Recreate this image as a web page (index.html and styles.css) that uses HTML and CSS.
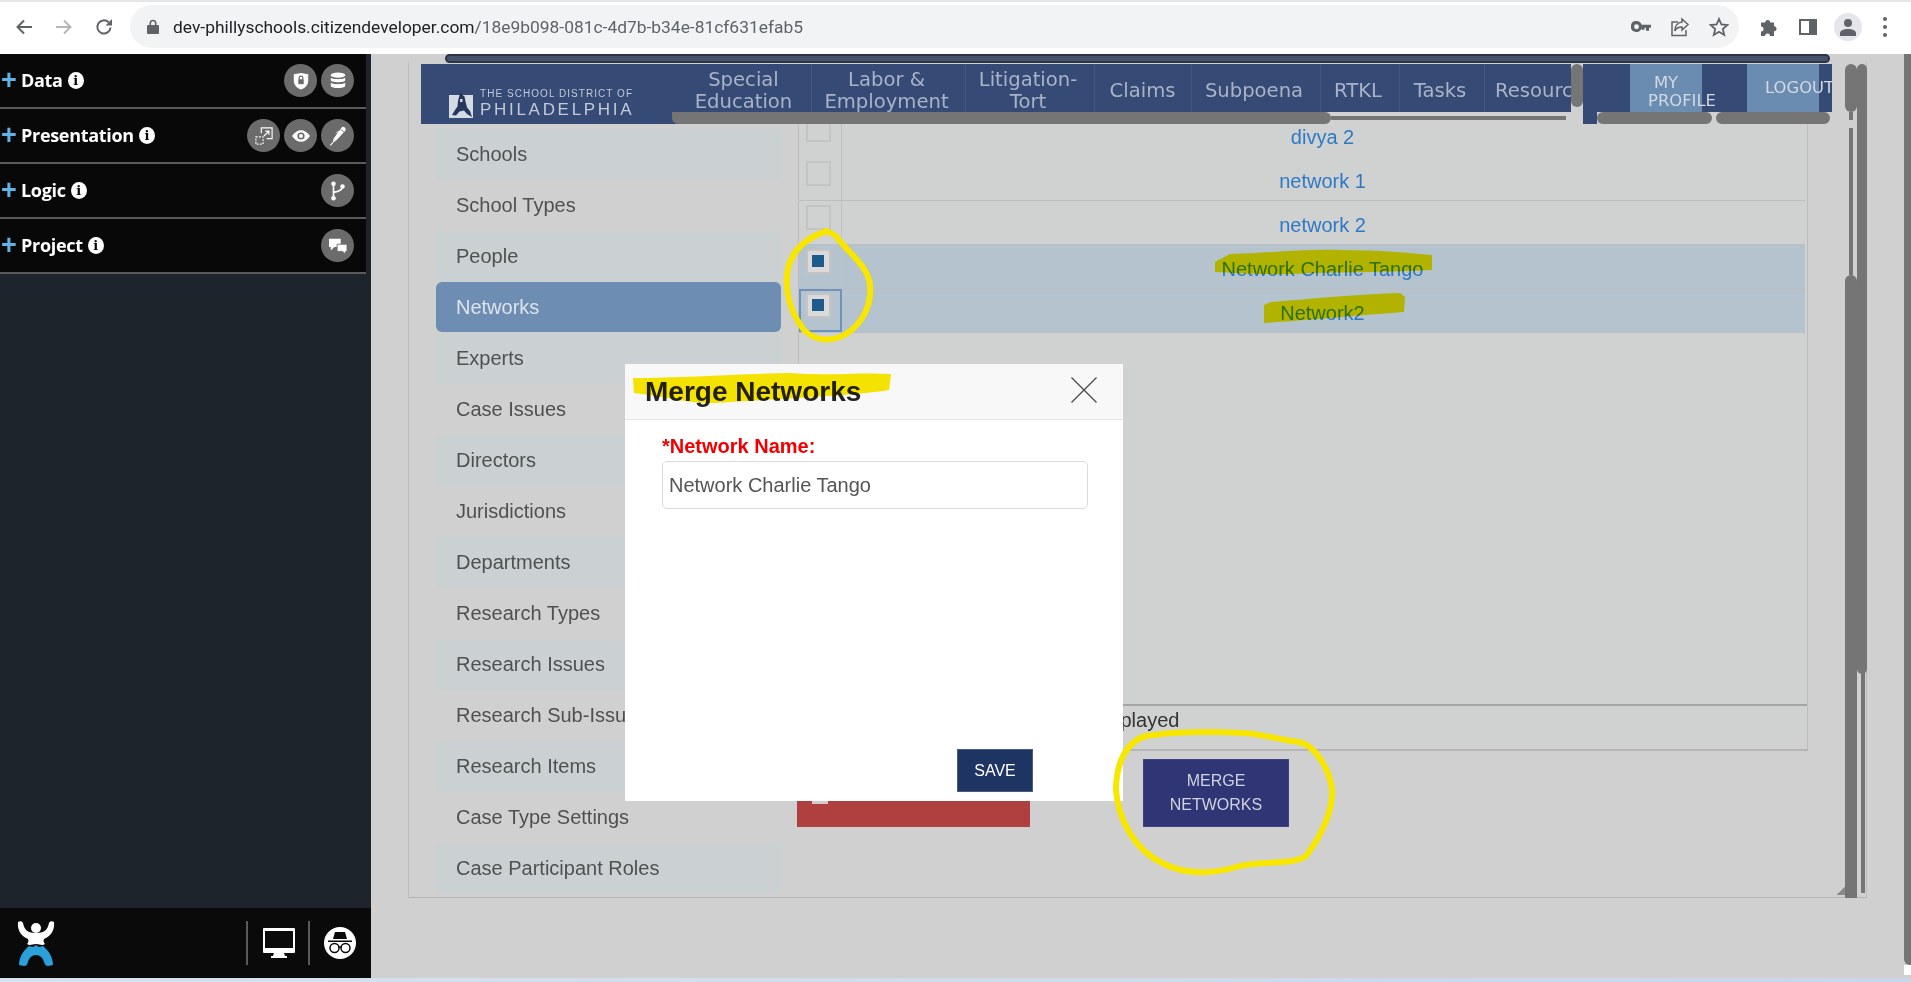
FILE: index.html
```html
<!DOCTYPE html>
<html lang="en">
<head>
    <meta charset="UTF-8">
    <title>Merge Networks</title>
    <link rel="stylesheet" href="styles.css">
</head>
<body>
    <!-- browser toolbar -->
    <div class="browser-bar">
        <svg class="tb-icon" width="18" height="18" viewBox="0 0 18 18"><path d="M17 9H3M9 2.500 2.500 9 9 15.500" fill="none" stroke="#5f6368" stroke-width="2"/></svg>
        <svg class="tb-icon" width="18" height="18" viewBox="0 0 18 18"><path d="M1 9h14M9 2.500 15.500 9 9 15.500" fill="none" stroke="#b4b7bb" stroke-width="2"/></svg>
        <svg class="tb-icon" width="18" height="18" viewBox="0 0 18 18"><path d="M15.500 9.500a6.600 6.600 0 1 1-1.900-5.200" fill="none" stroke="#5f6368" stroke-width="2"/><path d="M17 1v6.500h-6.500z" fill="#5f6368"/></svg>
        <div class="address-pill">
            <svg class="lock" width="12" height="15" viewBox="0 0 12 15"><path d="M2.500 6V4.200a3.500 3.500 0 0 1 7 0V6H11a1 1 0 0 1 1 1v7a1 1 0 0 1-1 1H1a1 1 0 0 1-1-1V7a1 1 0 0 1 1-1zm1.600 0h3.800V4.200a1.900 1.900 0 0 0-3.800 0z" fill="#5f6368"/></svg>
            <div class="address-text"><span class="host">dev-phillyschools.citizendeveloper.com</span>/18e9b098-081c-4d7b-b34e-81cf631efab5</div>
            <svg class="pill-icon" width="20" height="12" viewBox="0 0 20 12"><path d="M5.500 0a5.500 5.500 0 0 1 5.200 3.800H20v3h-2v3h-3v-3h-1.500v2h-3V7.300A5.500 5.500 0 1 1 5.500 0zm0 3.300a2.400 2.400 0 1 0 0 4.900 2.400 2.400 0 0 0 0-4.900z" fill="#5f6368"/></svg>
            <svg class="pill-icon" width="20" height="20" viewBox="0 0 20 20"><path d="M8 5H2v13.500h14V13M12 2l6 5.500-6 5.500V10C8 10 6 11.500 4.800 14c0-5 3-8.500 7.200-9z" fill="none" stroke="#5f6368" stroke-width="1.500"/></svg>
            <svg class="pill-icon" width="20" height="20" viewBox="0 0 20 20"><path d="m10 2 2.400 5.500 6 .5-4.600 4 1.400 5.900L10 14.800 4.800 17.900 6.200 12 1.600 8l6-.5z" fill="none" stroke="#5f6368" stroke-width="1.800"/></svg>
        </div>
        <svg class="ext-icon" width="18" height="18" viewBox="0 0 18 18"><path d="M1 4.500h4.200a2.500 2.500 0 1 1 5 0H14v3.800a2.500 2.500 0 1 1 0 5V18h-4a2.500 2.500 0 0 0-5 0H1v-4.500a2.500 2.500 0 1 0 0-5z" fill="#5f6368"/></svg>
        <svg class="ext-icon panel-icon" width="18" height="18" viewBox="0 0 18 18"><path d="M0 1h18v16H0zm2 2v12h8V3z" fill="#5f6368"/></svg>
        <div class="avatar"><svg width="16" height="18" viewBox="0 0 16 18"><circle cx="8" cy="5" r="4" fill="#5f6368"/><path d="M0 18v-3c0-2.500 4-4 8-4s8 1.500 8 4v3z" fill="#5f6368"/></svg></div>
        <div class="menu-dots"><i></i><i></i><i></i></div>
    </div>

    <div class="app">
        <!-- builder sidebar -->
        <aside class="sidebar">
            <div class="section">
                <span class="plus">+</span><span class="section-name">Data</span><span class="info">i</span>
                <div class="round-icons">
                    <span class="round"><svg width="18" height="20" viewBox="0 0 18 20"><path d="M1 2.500 9 1l8 1.500V10c0 5-4 8-8 9.500C5 18 1 15 1 10z" fill="#fff"/><path d="M7 8V6.500a2 2 0 0 1 4 0V8" fill="none" stroke="#6b6b6b" stroke-width="1.400"/><rect x="6" y="8" width="6" height="5.500" fill="#6b6b6b"/></svg></span>
                    <span class="round"><svg width="18" height="20" viewBox="0 0 18 20"><ellipse cx="9" cy="3.500" rx="8" ry="3" fill="#fff"/><path d="M1 6.500c1 2 15 2 16 0v3c-1 2.500-15 2.500-16 0zM1 12c1 2 15 2 16 0v3.500c-1 3-15 3-16 0z" fill="#fff"/></svg></span>
                </div>
            </div>
            <div class="section">
                <span class="plus">+</span><span class="section-name">Presentation</span><span class="info">i</span>
                <div class="round-icons">
                    <span class="round"><svg width="20" height="20" viewBox="0 0 20 20"><path d="M7 7V1h12v12h-6" fill="none" stroke="#fff" stroke-width="1.300"/><path d="M10 10l5-5M11.500 4.500H15.500V8.500" fill="none" stroke="#fff" stroke-width="1.300"/><rect x="1" y="11" width="8" height="8" fill="none" stroke="#fff" stroke-width="1.300" stroke-dasharray="2 1.500"/></svg></span>
                    <span class="round"><svg width="20" height="14" viewBox="0 0 20 14"><path d="M0 7c3-4.500 6.500-6.500 10-6.500S17 2.500 20 7c-3 4.500-6.500 6.500-10 6.500S3 11.500 0 7z" fill="#fff"/><circle cx="10" cy="7" r="4" fill="#6b6b6b"/><circle cx="10" cy="7" r="2.200" fill="#fff"/></svg></span>
                    <span class="round"><svg width="20" height="22" viewBox="0 0 20 22"><path d="M14 1.500c1-1 2.800-1 3.800.2 1 1.100 1 2.700 0 3.700L8 16l-3.800 2.500L5 14z" fill="#fff"/><path d="M13 3.500l4 3.500" stroke="#6b6b6b" stroke-width="1"/><path d="M13.500 8l-3-2.500L8 8" fill="none" stroke="#fff" stroke-width="1"/><path d="M4.500 18 1.500 21.500" stroke="#fff" stroke-width="1.200"/></svg></span>
                </div>
            </div>
            <div class="section">
                <span class="plus">+</span><span class="section-name">Logic</span><span class="info">i</span>
                <div class="round-icons">
                    <span class="round"><svg width="16" height="22" viewBox="0 0 16 22"><circle cx="3" cy="3" r="2.500" fill="#fff"/><circle cx="3" cy="19" r="2.500" fill="#fff"/><circle cx="13" cy="6" r="2.500" fill="#fff"/><path d="M3 3v16M13 6c0 4-4 5.500-10 6.500" fill="none" stroke="#fff" stroke-width="1.800"/></svg></span>
                </div>
            </div>
            <div class="section">
                <span class="plus">+</span><span class="section-name">Project</span><span class="info">i</span>
                <div class="round-icons">
                    <span class="round"><svg width="20" height="18" viewBox="0 0 20 18"><path d="M0 1h13v9H6l-4 4v-4H0z" fill="#fff"/><path d="M9 7h11v8h-1.500v3L15 15H9z" fill="#fff" stroke="#6b6b6b" stroke-width="1"/></svg></span>
                </div>
            </div>
            <div class="sidebar-fill"></div>
            <div class="sidebar-footer">
                <svg class="brand" width="38" height="46" viewBox="0 0 38 46">
                    <circle cx="19" cy="7" r="5" fill="#fff"/>
                    <path d="M1 1c2-1 4-1 5 1 1 5 3 10 13 10S31 7 32 2c1-2 3-2 5-1 1 8-3 14-10 17-1 2 0 4 1 5-3 2-5 0-9 0s-6 2-9 0c1-1 2-3 1-5C4 15 0 9 1 1z" fill="#fff"/>
                    <path d="M2 44c0-6 3-13 8-17 2-3 4-1 5-1 2 0 4-2 4-2s2 2 4 2c1 0 3-2 5 1 5 4 8 11 8 17l-5 1c-2 0-3-1-4-4-1-4-4-7-8-7s-7 3-8 7c-1 3-2 4-4 4z" fill="#2a9fd8"/>
                </svg>
                <div class="footer-icons">
                    <svg width="32" height="30" viewBox="0 0 32 30"><path d="M1 0h30a1 1 0 0 1 1 1v23a1 1 0 0 1-1 1H1a1 1 0 0 1-1-1V1a1 1 0 0 1 1-1zm1 3v17h28V3z" fill="#fff"/><path d="M11 25h10l1 3h2v2H8v-2h2z" fill="#fff"/></svg>
                    <span class="spy"><svg width="24" height="22" viewBox="0 0 24 22"><path d="M7 0h10l2 7H5z" fill="#0a0a0a"/><path d="M0 8.500h24V10H0z" fill="#0a0a0a"/><circle cx="6.500" cy="16" r="4.500" fill="none" stroke="#0a0a0a" stroke-width="1.500"/><circle cx="17.500" cy="16" r="4.500" fill="none" stroke="#0a0a0a" stroke-width="1.500"/><path d="M10.500 15h3" stroke="#0a0a0a" stroke-width="1.500"/></svg></span>
                </div>
            </div>
        </aside>

        <main class="workspace">
            <div class="panel">
                <header class="app-header">
                    <div class="brand-logo">
                        <svg width="24" height="26" viewBox="0 0 24 26"><path d="M0 3h24v23H0z" fill="#d5dae4"/><path d="M12 0l1.500 3 2 1.500 1 5 1.500 6 3 3.500 2 6-5-3-3-3.500-4.500 1-3.500 4-4-.5 3-5 2.500-3.500.5-5.500 1-4L10.500 3z" fill="#26385e"/><path d="M11 7h2.500v3H11z" fill="#d5dae4"/></svg>
                        <div class="brand-text">
                            <div class="brand-small">THE SCHOOL DISTRICT OF</div>
                            <div class="brand-big">PHILADELPHIA</div>
                        </div>
                    </div>
                    <nav class="top-nav">
                        <a class="nav-item w-special">Special Education</a>
                        <a class="nav-item w-labor">Labor &amp; Employment</a>
                        <a class="nav-item w-lit">Litigation-Tort</a>
                        <a class="nav-item w-claims">Claims</a>
                        <a class="nav-item w-sub">Subpoena</a>
                        <a class="nav-item w-rtkl">RTKL</a>
                        <a class="nav-item w-tasks">Tasks</a>
                        <a class="nav-item w-res">Resources</a>
                    </nav>
                    <div class="user-actions">
                        <a class="user-btn profile"><span class="my">MY</span><span class="prof">PROFILE</span></a>
                        <a class="user-btn logout">LOGOUT</a>
                    </div>
                </header>

                <div class="content">
                    <ul class="side-list">
                        <li>Schools</li>
                        <li>School Types</li>
                        <li>People</li>
                        <li class="active">Networks</li>
                        <li>Experts</li>
                        <li>Case Issues</li>
                        <li>Directors</li>
                        <li>Jurisdictions</li>
                        <li>Departments</li>
                        <li>Research Types</li>
                        <li>Research Issues</li>
                        <li>Research Sub-Issues</li>
                        <li>Research Items</li>
                        <li>Case Type Settings</li>
                        <li>Case Participant Roles</li>
                    </ul>

                    <section class="grid-area">
                        <div class="grid">
                            <div class="grid-rows">
                                <div class="row no-line">
                                    <div class="check-cell"><span class="check"></span></div>
                                    <a class="row-link">divya 2</a>
                                </div>
                                <div class="row">
                                    <div class="check-cell"><span class="check"></span></div>
                                    <a class="row-link">network 1</a>
                                </div>
                                <div class="row">
                                    <div class="check-cell"><span class="check"></span></div>
                                    <a class="row-link">network 2</a>
                                </div>
                                <div class="row selected">
                                    <div class="check-cell"><span class="check on"></span></div>
                                    <a class="row-link">Network Charlie Tango</a>
                                </div>
                                <div class="row selected">
                                    <div class="check-cell focused"><span class="check on"></span></div>
                                    <a class="row-link">Network2</a>
                                </div>
                            </div>
                            <div class="pager">5 records displayed</div>
                        </div>
                        <div class="grid-actions">
                            <button class="delete-btn"></button>
                            <button class="merge-btn">MERGE<br>NETWORKS</button>
                        </div>
                    </section>
                </div>

                <!-- leftover scrollbars from the builder preview -->
                <div class="sb sb-top"></div>
                <div class="sb sb-nav-track"></div>
                <div class="sb sb-nav-thumb"></div>
                <div class="sb sb-nav-v"></div>
                <div class="sb sb-thumb-a"></div>
                <div class="sb sb-thumb-b"></div>
                <div class="sb sb-v-a"></div>
                <div class="sb sb-v-track1"></div>
                <div class="sb sb-v-track2"></div>
                <div class="sb sb-v-b"></div>
                <div class="sb sb-v-c"></div>
                <div class="sb sb-v-track3"></div>
                <div class="sb sb-grip"></div>
            </div>
        </main>
    </div>
    <div class="taskbar-edge"></div>

    <!-- modal -->
    <div class="modal">
        <div class="modal-head">
            <h2>Merge Networks</h2>
            <svg width="26" height="26" viewBox="0 0 26 26"><path d="M0.500 0.500 25.500 25.500M25.500 0.500 0.500 25.500" stroke="#444" stroke-width="1.200"/></svg>
        </div>
        <div class="modal-body">
            <label class="field-label">*Network Name:</label>
            <div class="field-input">Network Charlie Tango</div>
        </div>
        <div class="modal-foot">
            <button class="save-btn">SAVE</button>
        </div>
    </div>

    <!-- highlighter marks drawn on the screenshot -->
    <svg class="marks marks-fill" width="1911" height="982" viewBox="0 0 1911 982">
        <path d="M633 378C680 378 740 374 790 373 825 376 860 372 891 374L889 390C850 396 790 398 730 402 700 406 670 398 650 395L634 393Z"/>
        <path d="M1215 262 1230 254C1270 253 1300 249 1340 250 1380 250 1410 253 1432 255L1432 270C1390 272 1350 272 1310 273 1280 276 1240 273 1215 272Z"/>
        <path d="M1264 305 1271 302C1310 299 1360 294 1400 293L1405 297 1404 312C1360 315 1310 320 1264 323Z"/>
    </svg>
    <svg class="marks marks-line" width="1911" height="982" viewBox="0 0 1911 982">
        <path d="M827 231C810 236 793 248 788 268 784 290 790 312 804 330 816 342 832 342 846 334 862 324 872 305 870 285 868 265 845 250 836 236Z"/>
        <path d="M1242 733C1210 731 1170 732 1146 736 1125 742 1116 765 1116 790 1118 820 1135 850 1162 863 1185 875 1210 875 1240 866 1265 860 1290 866 1306 856 1322 835 1333 810 1332 790 1330 770 1315 745 1299 742 1280 740 1258 733 1242 733Z"/>
    </svg>
</body>
</html>
```

FILE: styles.css
```css
* {
    box-sizing: border-box;
}

body {
    margin: 0;
    height: 982px;
    overflow: hidden;
    display: flex;
    flex-direction: column;
    font-family: "Liberation Sans", Arial, sans-serif;
    background-color: #d0d0d0;
}

ul {
    list-style: none;
    margin: 0;
    padding: 0;
}

/* Browser toolbar */
.browser-bar {
    height: 54px;
    flex-shrink: 0;
    display: flex;
    align-items: center;
    background-color: #fff;
    border-top: 2px solid #e4e6ea;
    padding-left: 15px;
    padding-bottom: 3px;
}

.tb-icon {
    margin-right: 22px;
}

.address-pill {
    width: 1609px;
    height: 43px;
    margin-left: -5px;
    border-radius: 22px;
    background-color: #f1f3f4;
    display: flex;
    align-items: center;
    padding: 0 10px 0 17px;
    flex-shrink: 0;
}

.lock {
    flex-shrink: 0;
}

.address-text {
    font-family: "Roboto", sans-serif;
    font-size: 17.400px;
    color: #5f6368;
    margin-left: 14px;
    flex: 1;
    white-space: nowrap;
}

.address-text .host {
    color: #202124;
}

.pill-icon {
    margin-left: 19px;
    flex-shrink: 0;
}

.ext-icon {
    margin-left: 21px;
    margin-right: 4px;
    flex-shrink: 0;
}

.panel-icon {
    margin-left: 17px;
}

.avatar {
    width: 28px;
    height: 28px;
    margin-left: 13px;
    border-radius: 50%;
    background-color: #e4e6ec;
    display: flex;
    align-items: center;
    justify-content: center;
    flex-shrink: 0;
}

.menu-dots {
    margin-left: 21px;
    display: flex;
    flex-direction: column;
    gap: 4px;
}

.menu-dots i {
    display: block;
    width: 4px;
    height: 4px;
    border-radius: 50%;
    background-color: #5f6368;
}

/* App frame */
.app {
    display: flex;
    flex: 1;
    min-height: 0;
}

.taskbar-edge {
    height: 4px;
    flex-shrink: 0;
    background: linear-gradient(to right, #d6e2f2, #c9d6ea);
}

.sidebar {
    width: 371px;
    flex-shrink: 0;
    display: flex;
    flex-direction: column;
    background-color: #1e242c;
}

.section {
    width: 366px;
    height: 55px;
    display: flex;
    align-items: center;
    background-color: #080808;
    border-bottom: 2px solid #5a5a5a;
    color: #fff;
    font-family: "Open Sans", sans-serif;
    font-weight: 700;
    font-size: 18px;
    flex-shrink: 0;
    padding-left: 1px;
}

.plus {
    color: #5fb3e6;
    font-family: "Liberation Sans", sans-serif;
    font-size: 27px;
    font-weight: 700;
    width: 20px;
    line-height: 1;
}

.section-name {
    letter-spacing: -0.300px;
    margin-top: -2px;
}

.info {
    width: 16px;
    height: 17px;
    margin-left: 5px;
    border-radius: 50%;
    background-color: #fff;
    color: #080808;
    font-family: "DejaVu Serif", serif;
    font-size: 13px;
    font-weight: 700;
    line-height: 17px;
    text-align: center;
}

.round-icons {
    margin-left: auto;
    display: flex;
    gap: 4px;
    padding-right: 12px;
}

.round {
    width: 33px;
    height: 33px;
    border-radius: 50%;
    background-color: #6b6b6b;
    display: flex;
    align-items: center;
    justify-content: center;
}

.round svg {
    transform: scale(0.9);
}

.sidebar-fill {
    flex: 1;
}

.sidebar-footer {
    height: 70px;
    background-color: #0a0a0a;
    display: flex;
    align-items: center;
    padding-left: 17px;
}

.brand {
    margin-top: 2px;
}

.footer-icons {
    margin-left: auto;
    margin-right: 15px;
    display: flex;
    align-items: center;
    gap: 29px;
    height: 44px;
    border-left: 2px solid #5a5a5a;
    padding-left: 15px;
}

.spy {
    width: 32px;
    height: 32px;
    border-radius: 50%;
    background-color: #fff;
    display: flex;
    align-items: center;
    justify-content: center;
    position: relative;
}

.spy::before {
    content: "";
    position: absolute;
    left: -16px;
    top: -6px;
    width: 2px;
    height: 44px;
    background-color: #5a5a5a;
}

/* Main area */
.workspace {
    flex: 1;
    background-color: #d0d0d0;
    padding: 8px 44px 80px 37px;
    position: relative;
}

.workspace::after {
    content: "";
    position: absolute;
    right: 0;
    top: 0;
    bottom: 13px;
    width: 7px;
    background-color: #757575;
    border-radius: 0 0 0 6px;
}

.workspace::before {
    content: "";
    position: absolute;
    right: 0;
    bottom: 3px;
    width: 7px;
    height: 10px;
    background-color: #fff;
}

.panel {
    position: relative;
    height: 100%;
    border-left: 1px solid #bdbdbd;
    border-right: 1px solid #bdbdbd;
    border-bottom: 1px solid #b5b5b5;
    padding: 2px 0 0 12px;
}

.app-header {
    height: 60px;
    width: 1411px;
    display: flex;
    position: relative;
    z-index: 1;
}

.brand-logo {
    width: 257px;
    height: 60px;
    flex-shrink: 0;
    background-color: #354a75;
    display: flex;
    align-items: flex-end;
    gap: 7px;
    padding: 0 0 6px 28px;
}

.brand-text {
    color: #c3cad9;
    line-height: 1;
}

.brand-small {
    font-size: 10px;
    letter-spacing: 1.050px;
    white-space: nowrap;
}

.brand-big {
    font-size: 17px;
    letter-spacing: 2.700px;
    margin-top: 2px;
}

.top-nav {
    width: 893px;
    height: 48px;
    flex-shrink: 0;
    display: flex;
    overflow: hidden;
    background-color: #354a75;
    font-family: "DejaVu Sans", Verdana, sans-serif;
    font-size: 19.600px;
    line-height: 22px;
    color: #a9b3c8;
}

.nav-item {
    flex-shrink: 0;
    height: 48px;
    padding: 6px 4px 0 0;
    display: flex;
    align-items: center;
    justify-content: center;
    text-align: center;
    border-right: 1px solid #44587f;
}

.w-special {
    width: 134px;
    padding-right: 2px;
}

.w-labor { width: 154px; }
.w-lit { width: 129px; }

.w-claims {
    width: 97px;
    padding-right: 1px;
}

.w-sub { width: 129px; }
.w-rtkl { width: 79px; }
.w-tasks { width: 85px; }

.w-res {
    border-right: 0;
    justify-content: flex-start;
    padding-left: 10px;
    width: 120px;
}

/* Blue strip runs down past the buttons on its left edge */
.user-actions {
    width: 249px;
    height: 60px;
    flex-shrink: 0;
    margin-left: 12px;
    background:
        linear-gradient(#354a75, #354a75) 0 0 / 14px 60px no-repeat,
        linear-gradient(#354a75, #354a75) 0 0 / 100% 48px no-repeat;
    display: flex;
    align-items: flex-start;
    gap: 45px;
    padding-left: 47px;
    overflow: hidden;
    font-family: "DejaVu Sans", sans-serif;
    font-size: 16.400px;
    color: #d3d9e3;
}

.user-btn {
    width: 72px;
    height: 48px;
    flex-shrink: 0;
    background-color: #6a8cb1;
    white-space: nowrap;
}

.profile {
    padding-top: 10px;
    line-height: 18px;
}

.my {
    display: block;
    text-align: center;
}

.prof {
    display: block;
    margin-left: 18px;
}

.logout {
    padding: 14px 0 0 18px;
    line-height: 20px;
}

.content {
    display: flex;
    padding-left: 15px;
    gap: 17px;
}

.side-list {
    width: 345px;
    padding-top: 5px;
    flex-shrink: 0;
}

.side-list li {
    height: 51px;
    line-height: 50px;
    padding-left: 20px;
    font-size: 20px;
    color: #4f5151;
    white-space: nowrap;
    overflow: hidden;
}

.side-list li:nth-child(odd) {
    background-color: #cbd1d2;
    border-radius: 4px;
}

.side-list li.active {
    background-color: #6d8db3;
    color: #dde4ec;
    border-radius: 6px;
    height: 50px;
    margin-bottom: 1px;
}

.grid-area {
    width: 1010px;
    margin-top: -11px;
}

.grid {
    height: 638px;
    display: flex;
    flex-direction: column;
    background-color: #d0d2d2;
    border-left: 1px solid #bdbdbd;
    border-right: 1px solid #bdbdbd;
    border-bottom: 2px solid #b5b5b5;
}

.grid-rows {
    flex: 1;
    padding-right: 2px;
}

.row {
    height: 44px;
    display: flex;
    border-bottom: 1px solid #bcbebf;
}

.row.no-line {
    border-bottom: 0;
}

.row.selected {
    background-color: #b4c3ce;
}

.check-cell {
    width: 43px;
    flex-shrink: 0;
    border-right: 1px solid #c0c2c3;
    padding: 4px 0 0 7px;
}

.check-cell.focused {
    border: 2px solid #6a93bd;
    padding: 2px 0 0 5px;
}

.check {
    display: block;
    width: 25px;
    height: 25px;
    border: 2px solid #c4c4c4;
    position: relative;
}

.check.on {
    background-color: #dadada;
}

.check.on::after {
    content: "";
    position: absolute;
    left: 4px;
    top: 4px;
    width: 12px;
    height: 12px;
    background-color: #1f5a8c;
}

.row-link {
    flex: 1;
    text-align: center;
    font-size: 20px;
    line-height: 44px;
    color: #2f79c4;
    margin-top: 2px;
    padding-right: 2px;
}

.pager {
    height: 45px;
    border-top: 2px solid #a5a5a5;
    font-size: 20px;
    line-height: 26px;
    color: #333;
    padding: 1px 0 0 207px;
    white-space: nowrap;
}

.grid-actions {
    display: flex;
    gap: 113px;
    margin-top: 8px;
    margin-left: -1px;
}

.delete-btn {
    width: 233px;
    height: 68px;
    border: 0;
    background-color: #b04040;
    position: relative;
}

.delete-btn::before {
    content: "";
    position: absolute;
    left: 15px;
    bottom: 23px;
    width: 16px;
    height: 8px;
    background-color: #d8c8c8;
}

.merge-btn {
    width: 146px;
    height: 68px;
    border: 1px solid #3c4285;
    background-color: #2f3575;
    color: #cfd2df;
    font-family: "Liberation Sans", sans-serif;
    font-size: 16px;
    line-height: 24px;
    padding: 0;
}

/* Scrollbars left over in the page */
.sb {
    position: absolute;
    background-color: #757575;
    z-index: 2;
}

.sb-top {
    left: 36px;
    top: -8px;
    width: 1385px;
    height: 9px;
    background-color: #47536a;
    border: 2px solid #2c3546;
    border-radius: 5px;
}

.sb-nav-thumb {
    left: 263px;
    top: 50px;
    width: 659px;
    height: 12px;
    border-radius: 0 6px 6px 6px;
}

.sb-nav-track {
    left: 922px;
    top: 54px;
    width: 235px;
    height: 4px;
}

.sb-nav-v {
    left: 1162px;
    top: 2px;
    width: 12px;
    height: 43px;
    border-radius: 6px;
}

.sb-thumb-a {
    left: 1188px;
    top: 50px;
    width: 115px;
    height: 12px;
    border-radius: 6px;
}

.sb-thumb-b {
    left: 1307px;
    top: 50px;
    width: 114px;
    height: 12px;
    border-radius: 6px;
}

.sb-v-a {
    left: 1436px;
    top: 2px;
    width: 12px;
    height: 48px;
    border-radius: 6px;
}

.sb-v-track1 {
    left: 1440px;
    top: 50px;
    width: 4px;
    height: 8px;
}

.sb-v-track2 {
    left: 1440px;
    top: 66px;
    width: 4px;
    height: 147px;
}

.sb-v-b {
    left: 1436px;
    top: 213px;
    width: 12px;
    height: 623px;
    border-radius: 6px 6px 0 0;
}

.sb-v-c {
    left: 1448px;
    top: 2px;
    width: 10px;
    height: 610px;
    border-radius: 5px;
}

.sb-v-track3 {
    left: 1452px;
    top: 610px;
    width: 4px;
    height: 221px;
}

.sb-grip {
    left: 1428px;
    top: 825px;
    width: 8px;
    height: 8px;
    background: linear-gradient(135deg, transparent 50%, #8a8a8a 50%);
}

/* Modal */
.modal {
    position: absolute;
    left: 625px;
    top: 364px;
    width: 498px;
    height: 437px;
    background-color: #fff;
    display: flex;
    flex-direction: column;
    z-index: 5;
}

.modal-head {
    height: 56px;
    flex-shrink: 0;
    display: flex;
    align-items: center;
    justify-content: space-between;
    background-color: #f8f8f8;
    border-bottom: 1px solid #e5e5e5;
    padding: 0 26px 0 20px;
}

.modal-head svg {
    margin-top: -3px;
}

.modal-head h2 {
    margin: 0;
    font-size: 28px;
    font-weight: 700;
    color: #222;
}

.modal-body {
    flex: 1;
    padding: 15px 35px 0 37px;
}

.field-label {
    display: block;
    font-size: 20px;
    font-weight: 700;
    line-height: 23px;
    color: #f00000;
    margin-bottom: 3px;
}

.field-input {
    height: 48px;
    border: 1px solid #dcdcdc;
    border-radius: 5px;
    font-size: 20px;
    line-height: 46px;
    padding-left: 6px;
    color: #555;
}

.modal-foot {
    display: flex;
    justify-content: flex-end;
    padding: 0 90px 9px 0;
}

.save-btn {
    width: 76px;
    height: 43px;
    border: 1px solid #4a5a80;
    background-color: #1e3462;
    color: #fff;
    font-family: "Liberation Sans", sans-serif;
    font-size: 16px;
    padding: 0;
}

/* Highlighter */
.marks {
    position: absolute;
    left: 0;
    top: 0;
    pointer-events: none;
}

.marks-fill {
    z-index: 6;
    mix-blend-mode: multiply;
    fill: #fbea00;
}

.marks-line {
    z-index: 7;
    fill: none;
    stroke: #f7e600;
    stroke-width: 6;
    stroke-linejoin: round;
}
```
